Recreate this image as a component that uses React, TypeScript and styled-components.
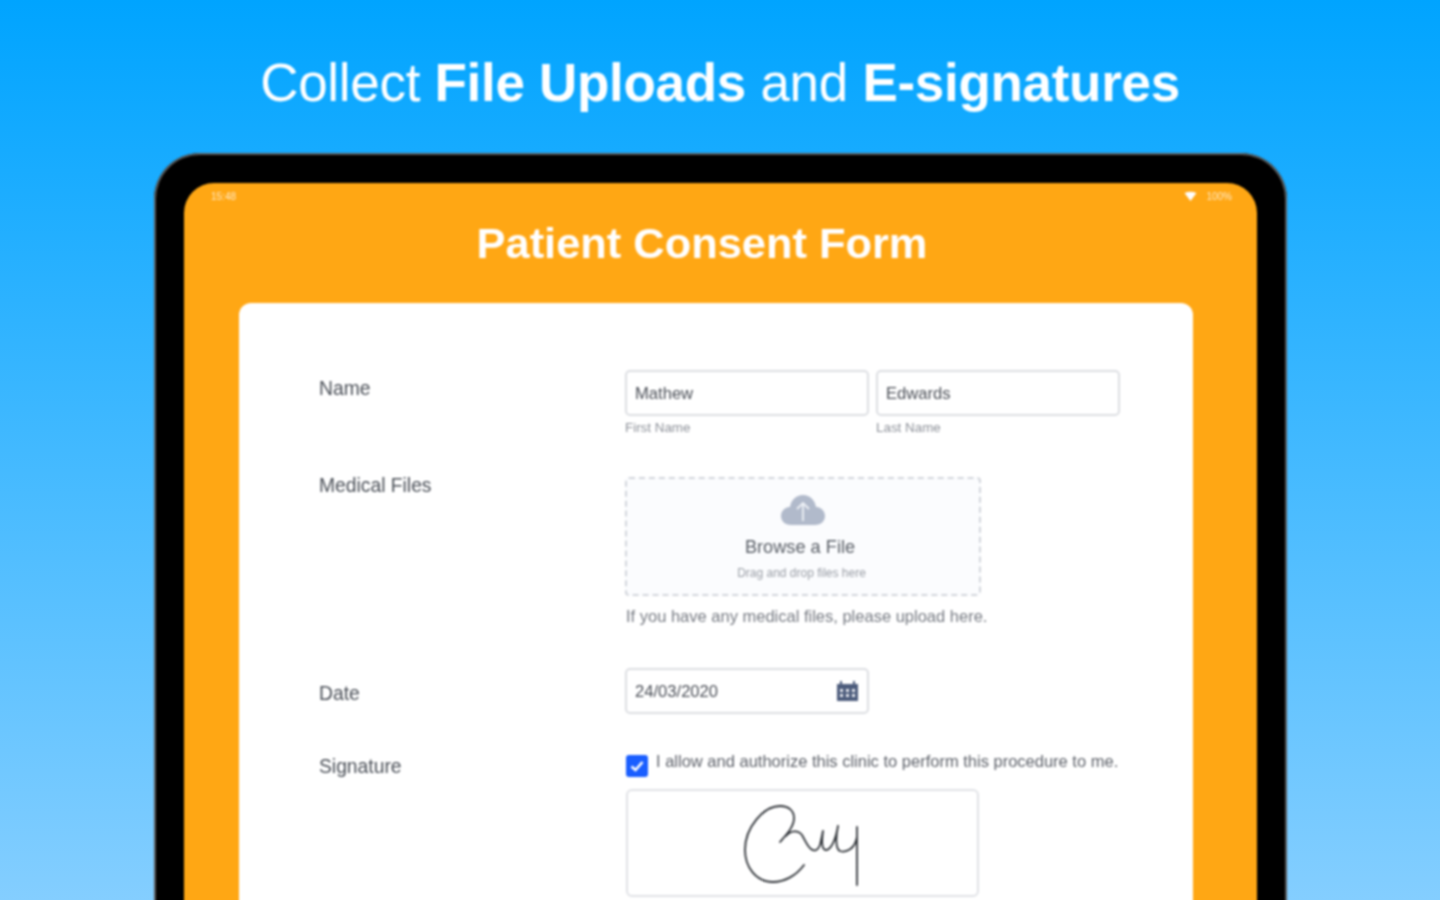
import styled, { createGlobalStyle } from 'styled-components'

const GlobalStyle = createGlobalStyle`
  html, body {
    margin: 0;
    padding: 0;
    height: 900px;
    overflow: hidden;
    background: #84ceff;
  }
`

const Page = styled.div`
  width: 1440px;
  height: 900px;
  overflow: hidden;
  background: linear-gradient(180deg, #00a4ff 0%, #84ceff 100%);
  font-family: 'Liberation Sans', Arial, sans-serif;
`
const Soft = styled.div`
  padding-top: 53px;
  filter: blur(0.8px);
`
const Headline = styled.h1`
  margin: 0 0 40px;
  font-size: 53px;
  line-height: 60px;
  font-weight: 400;
  letter-spacing: -0.3px;
  color: #ffffff;
  text-align: center;
`
const Tablet = styled.div`
  width: 1133px;
  height: 760px;
  margin-left: 154px;
  padding: 30px 30px 0;
  box-sizing: border-box;
  background: #000000;
  border-radius: 46px 46px 0 0;
  box-shadow: inset 0 0 0 2px #5a5a5a;
`
const Screen = styled.div`
  height: 100%;
  background: #ffa714;
  border-radius: 30px 30px 0 0;
  padding: 0 64px 0 55px;
`
const StatusBar = styled.div`
  display: flex;
  align-items: center;
  justify-content: space-between;
  height: 26px;
  margin: 0 -39px 0 -28px;
  font-size: 10px;
  color: #ffe9c4;
`
const StatusRight = styled.div`
  display: flex;
  align-items: center;
  gap: 9px;
`
const FormTitle = styled.div`
  height: 68px;
  line-height: 68px;
  margin-bottom: 26px;
  padding-right: 28px;
  text-align: center;
  font-size: 43.4px;
  font-weight: 700;
  color: #ffffff;
`
const Card = styled.div`
  height: 600px;
  background: #ffffff;
  border-radius: 12px 12px 0 0;
  padding: 67px 0 0 80px;
`
const Row = styled.div<{ $after: number }>`
  display: grid;
  grid-template-columns: 306px 1fr;
  margin-bottom: ${p => p.$after}px;
`
const Label = styled.div<{ $top: number }>`
  margin-top: ${p => p.$top}px;
  font-size: 19.3px;
  line-height: 20px;
  color: #4a4f57;
`
const NameFields = styled.div`
  display: flex;
  gap: 7px;
`
const Field = styled.div`
  width: 244px;
`
const InputBox = styled.div`
  display: flex;
  align-items: center;
  justify-content: space-between;
  height: 46px;
  box-sizing: border-box;
  padding: 2px 9px 0 8px;
  border: 2px solid #dcdee2;
  border-radius: 5px;
  font-size: 16.6px;
  color: #4c5058;
`
const CalendarIcon = styled.svg`
  margin-top: -2px;
`
const SubLabel = styled.div`
  margin-top: 4px;
  font-size: 13.4px;
  line-height: 16px;
  color: #8d9199;
`
const DropZone = styled.div`
  width: 356px;
  height: 119px;
  box-sizing: border-box;
  padding-top: 15px;
  display: flex;
  flex-direction: column;
  align-items: center;
  background: #fbfcfe;
  border: 2px dashed #d2d5db;
  border-radius: 4px;
`
const BrowseTitle = styled.div`
  margin-top: 10px;
  padding-right: 6px;
  font-size: 18.2px;
  line-height: 22px;
  color: #595e66;
`
const BrowseHint = styled.div`
  margin-top: 8px;
  padding-right: 3px;
  font-size: 12px;
  line-height: 14px;
  color: #9a9ea6;
`
const Helper = styled.div`
  margin-top: 11px;
  padding-left: 1px;
  font-size: 16.5px;
  line-height: 18px;
  color: #777b83;
`
const Consent = styled.div`
  display: flex;
  align-items: flex-start;
  gap: 8px;
  padding-left: 1px;
  font-size: 16.5px;
  line-height: 18px;
  color: #5f636b;
`
const Check = styled.div`
  width: 22px;
  height: 22px;
  margin-top: 3px;
  border-radius: 3px;
  background: #1a5eff;
  display: flex;
  align-items: center;
  justify-content: center;
`
const SignatureBox = styled.div`
  width: 353px;
  height: 108px;
  margin: 12px 0 0 1px;
  box-sizing: border-box;
  border: 2px solid #e0e2e6;
  border-radius: 6px;
`
const SignatureSvg = styled.svg`
  display: block;
  margin: -2px;
`

const App = () => (
  <Page>
    <GlobalStyle />
    <Soft>
      <Headline>
        Collect <b>File Uploads</b> and <b>E-signatures</b>
      </Headline>
      <Tablet>
        <Screen>
          <StatusBar>
            <span>15:48</span>
            <StatusRight>
              <svg width="13" height="10" viewBox="0 0 13 10">
                <path d="M0.5 2 Q6.5 -0.5 12.5 2 L6.5 10 Z" fill="#ffffff" />
              </svg>
              <span>100%</span>
            </StatusRight>
          </StatusBar>
          <FormTitle>Patient Consent Form</FormTitle>
          <Card>
            <Row $after={41}>
              <Label $top={9}>Name</Label>
              <NameFields>
                <Field>
                  <InputBox>Mathew</InputBox>
                  <SubLabel>First Name</SubLabel>
                </Field>
                <Field>
                  <InputBox>Edwards</InputBox>
                  <SubLabel>Last Name</SubLabel>
                </Field>
              </NameFields>
            </Row>
            <Row $after={43}>
              <Label $top={-1}>Medical Files</Label>
              <div>
                <DropZone>
                  <svg width="44" height="32" viewBox="0 0 44 32">
                    <path
                      d="M10 31 C4 31 0 27 0 22 C0 17 4 13 9 13 C10 6 15 1 22 1 C29 1 34 6 35 13 C40 13 44 17 44 22 C44 27 40 31 34 31 Z"
                      fill="#b1bacb"
                    />
                    <path d="M22 27 V9 M16 15 L22 9 L28 15" fill="none" stroke="#eef1f6" strokeWidth="1.8" />
                  </svg>
                  <BrowseTitle>Browse a File</BrowseTitle>
                  <BrowseHint>Drag and drop files here</BrowseHint>
                </DropZone>
                <Helper>If you have any medical files, please upload here.</Helper>
              </div>
            </Row>
            <Row $after={38}>
              <Label $top={16}>Date</Label>
              <Field>
                <InputBox>
                  24/03/2020
                  <CalendarIcon width="21" height="20" viewBox="0 0 21 20">
                    <path d="M0 3 H21 V20 H0 Z" fill="#4d5c7c" />
                    <path d="M4 0 V4 M17 0 V4" stroke="#4d5c7c" strokeWidth="2" />
                    <path
                      d="M3 8 H6 V11 H3 Z M9 8 H12 V11 H9 Z M15 8 H18 V11 H15 Z M3 13 H6 V16 H3 Z M9 13 H12 V16 H9 Z M15 13 H18 V16 H15 Z"
                      fill="#e6e9ef"
                    />
                  </CalendarIcon>
                </InputBox>
              </Field>
            </Row>
            <Row $after={0}>
              <Label $top={5}>Signature</Label>
              <div>
                <Consent>
                  <Check>
                    <svg width="14" height="12" viewBox="0 0 14 12">
                      <path d="M1.5 6.5 L5.5 10 L12.5 2" fill="none" stroke="#ffffff" strokeWidth="2.6" />
                    </svg>
                  </Check>
                  I allow and authorize this clinic to perform this procedure to me.
                </Consent>
                <SignatureBox>
                  <SignatureSvg width="353" height="108" viewBox="0 0 353 108">
                    <path
                      d="M178 76 C170 87 158 93 147 93 C130 93 119 78 119 61 C119 38 138 17 154 17 C163 17 168 22 168 29 C168 38 160 46 154 53 M160 47 C165 41 172 41 176 46 C179 51 181 57 185 60 C189 63 192 61 194 56 C195 52 196 47 197 42 C196 50 195 61 200 61 C205 61 210 50 212 37 C210 46 209 60 214 62 C220 64 229 60 231 48 L231 38 L231 96"
                      fill="none"
                      stroke="#2f3338"
                      strokeWidth="1.8"
                      strokeLinecap="round"
                      strokeLinejoin="round"
                    />
                  </SignatureSvg>
                </SignatureBox>
              </div>
            </Row>
          </Card>
        </Screen>
      </Tablet>
    </Soft>
  </Page>
)

export default App
